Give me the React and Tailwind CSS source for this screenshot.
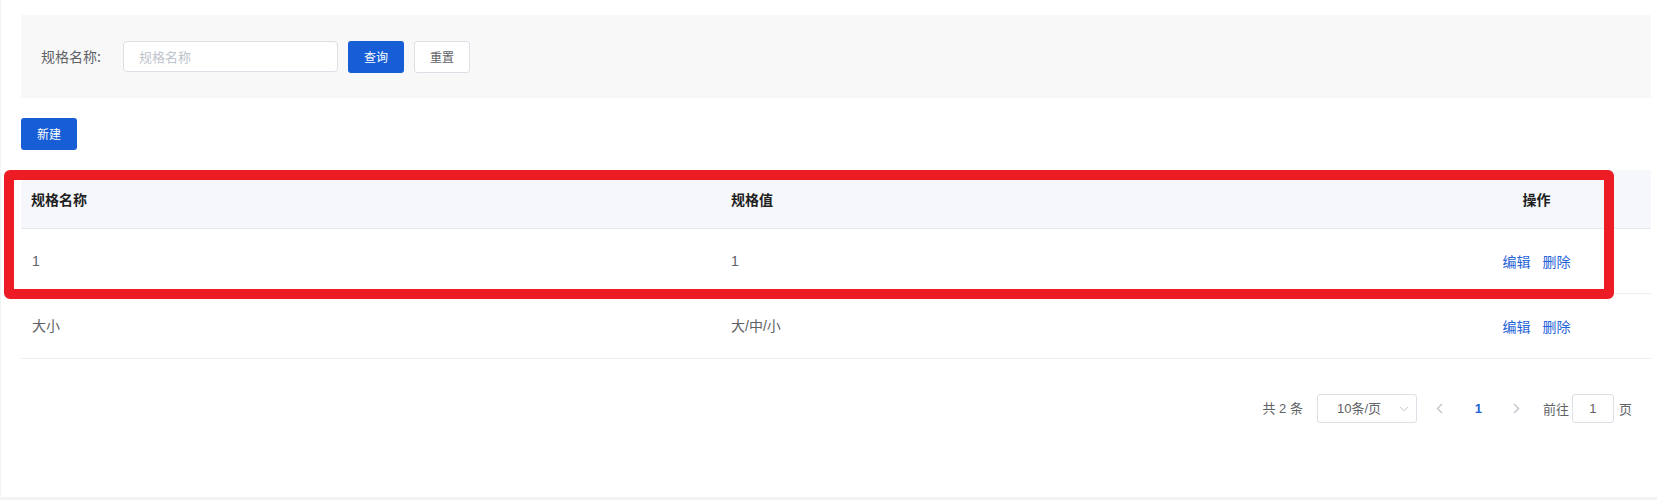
import React from "react";

const font = { fontFamily: '"Noto Sans CJK SC", "Liberation Sans", sans-serif' };
const latin = { fontFamily: '"Liberation Sans", "Noto Sans CJK SC", sans-serif' };

function ChevronLeft() {
  return (
    <svg width="7" height="11" viewBox="0 0 7 11" fill="none">
      <polyline points="6,1 1.5,5.5 6,10" stroke="#c0c4cc" strokeWidth="1.4" />
    </svg>
  );
}
function ChevronRight() {
  return (
    <svg width="7" height="11" viewBox="0 0 7 11" fill="none">
      <polyline points="1,1 5.5,5.5 1,10" stroke="#c0c4cc" strokeWidth="1.4" />
    </svg>
  );
}
function ChevronDown() {
  return (
    <svg width="10" height="6" viewBox="0 0 10 6" fill="none">
      <polyline points="1,0.8 5,4.8 9,0.8" stroke="#c0c4cc" strokeWidth="1" />
    </svg>
  );
}

const rows = [
  { name: "1", value: "1" },
  { name: "大小", value: "大/中/小" },
];

export default function App() {
  return (
    <div className="relative w-[1657px] h-[500px] bg-[#f2f3f5] overflow-hidden" style={font}>
      <div className="ml-[1px] h-[497px] bg-white pl-[20px] pr-[6px] pt-[15px]">
        {/* search band */}
        <div className="h-[83px] bg-[#f8f8f9] flex items-center pl-[20px]">
          <span className="text-[14px] text-[#606266] w-[82px]">规格名称:</span>
          <div className="w-[215px] h-[31px] border border-[#dcdfe6] rounded-[4px] bg-white flex items-center pl-[15px] text-[13px] text-[#c0c4cc]">
            规格名称
          </div>
          <button className="ml-[10px] w-[56px] h-[32px] rounded-[3px] bg-[#165dd6] text-white text-[12px]">
            查询
          </button>
          <button className="ml-[10px] w-[56px] h-[32px] rounded-[3px] bg-white border border-[#dcdfe6] text-[#606266] text-[12px]">
            重置
          </button>
        </div>

        {/* new button */}
        <button className="mt-[20px] w-[56px] h-[32px] rounded-[3px] bg-[#165dd6] text-white text-[12px] block">
          新建
        </button>

        {/* table */}
        <div className="mt-[20px] text-[14px]">
          <div className="grid grid-cols-[700px_701px_1fr] h-[59px] bg-[#f5f7fa] border-b border-[#e4e7ed] items-center font-bold text-[#1f1f1f]">
            <div className="pl-[10px]">规格名称</div>
            <div className="pl-[10px]">规格值</div>
            <div className="text-center">操作</div>
          </div>
          {rows.map((r, i) => (
            <div
              key={i}
              className="grid grid-cols-[700px_701px_1fr] h-[65px] border-b border-[#ebeef5] items-center text-[#606266]"
            >
              <div className="pl-[11px]" style={latin}>{r.name}</div>
              <div className="pl-[10px]" style={latin}>{r.value}</div>
              <div className="flex justify-center gap-[12px] text-[#1f64d8] text-[14px]">
                <span>编辑</span>
                <span>删除</span>
              </div>
            </div>
          ))}
        </div>

        {/* pagination */}
        <div className="mt-[35px] h-[29px] flex items-center justify-end pr-[19px] text-[13px] text-[#606266]">
          <span style={latin}>共 2 条</span>
          <div className="ml-[14px] w-[100px] h-[29px] border border-[#dcdfe6] rounded-[3px] flex items-center justify-between pl-[19px] pr-[7px]">
            <span style={latin}>10条/页</span>
            <ChevronDown />
          </div>
          <div className="ml-[4px] w-[38px] flex justify-center">
            <ChevronLeft />
          </div>
          <div className="w-[39px] text-center font-bold text-[#1f64d8]" style={latin}>1</div>
          <div className="w-[38px] flex justify-center">
            <ChevronRight />
          </div>
          <span className="ml-[7px]">前往</span>
          <div className="ml-[3px] w-[42px] h-[29px] border border-[#dcdfe6] rounded-[3px] flex items-center justify-center" style={latin}>
            1
          </div>
          <span className="ml-[5px]">页</span>
        </div>
      </div>

      {/* red annotation box */}
      <div className="absolute left-[4px] top-[170px] w-[1610px] h-[129px] border-[10px] border-[#ed1c24] rounded-[6px] pointer-events-none" />
    </div>
  );
}
